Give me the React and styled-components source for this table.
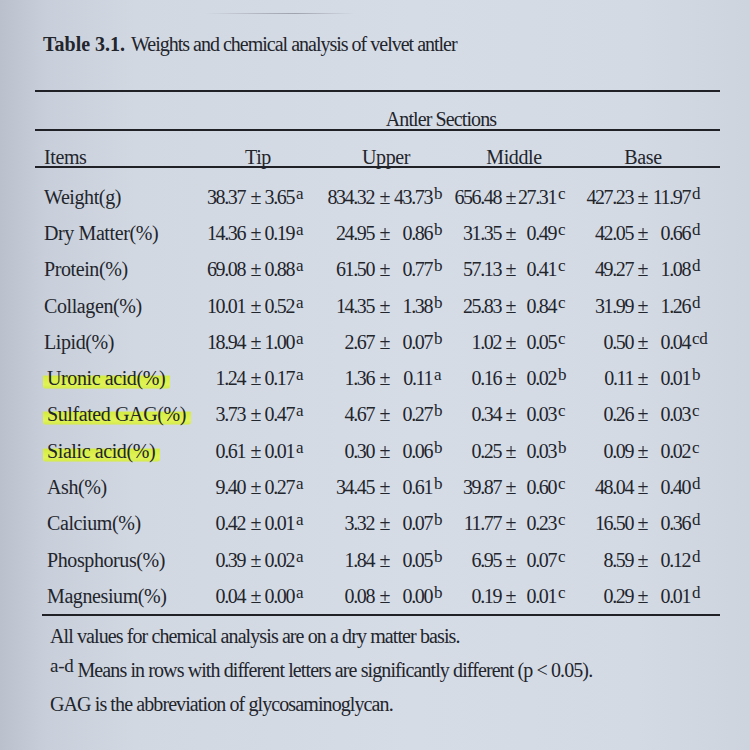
import React from "react";
import styled, { createGlobalStyle } from "styled-components";

const GlobalStyle = createGlobalStyle`
  html, body { margin: 0; padding: 0; }
  body {
    width: 750px;
    height: 750px;
    overflow: hidden;
    background: #d2d8e2;
  }
`;

const Paper = styled.div`
  width: 750px;
  height: 750px;
  box-sizing: border-box;
  padding-top: 13px;
  background: linear-gradient(90deg, #bac1cc 0%, #c8cfda 6%, #d2d8e2 18%, #d6dce6 55%, #d4dae4 85%, #cdd4de 100%);
  font-family: "Liberation Serif", "Times New Roman", serif;
  color: #22252c;
`;

const Smudge = styled.div`
  margin-left: 205px;
  width: 150px;
  height: 1px;
  background: linear-gradient(90deg, rgba(60,60,70,0) 0%, rgba(60,60,70,0.25) 40%, rgba(60,60,70,0.35) 60%, rgba(60,60,70,0) 100%);
`;

const Title = styled.div`
  margin-top: 18px;
  padding-left: 43px;
  font-size: 20px;
  line-height: 24px;
  white-space: nowrap;
`;

const TitleLabel = styled.span`
  font-weight: bold;
  margin-right: 6px;
`;

const TitleText = styled.span`
  letter-spacing: -1px;
`;

const Table = styled.div`
  margin-top: 34px;
  margin-left: 35px;
  width: 685px;
`;

const Rule = styled.div`
  height: 2px;
  background: #1f2127;
  margin-left: ${(p) => p.$indent || 0}px;
`;

const SectionHead = styled.div`
  height: 37px;
  box-sizing: border-box;
  padding-top: 17px;
  padding-left: 127px;
  font-size: 20px;
  line-height: 20px;
  letter-spacing: -0.9px;
  text-align: center;
`;

const HeaderRow = styled.div`
  display: grid;
  grid-template-columns: 169px 108px 148px 108px 150px;
  height: 35px;
  box-sizing: border-box;
  padding-top: 17px;
  font-size: 20px;
  line-height: 18px;
  letter-spacing: -0.4px;
`;

const HeadCell = styled.div`
  text-align: ${(p) => (p.$left ? "left" : "center")};
  padding-left: ${(p) => (p.$left ? "9px" : "0")};
  white-space: nowrap;
`;

const Body = styled.div`
  padding-top: 10.7px;
`;

const Row = styled.div`
  display: grid;
  grid-template-columns:
    169px
    44px 16px 31px 30px
    52px 16px 40px 22px
    49px 14px 39px 28px
    51px 14px 41px 29px;
  height: 36.3px;
  font-size: 20px;
  line-height: 36.3px;
  white-space: nowrap;
`;

const Label = styled.div`
  padding-left: ${(p) => (p.$shift ? 12 : 9)}px;
  letter-spacing: -0.4px;
`;

const Mark = styled.span`
  margin-left: -4px;
  padding: 0 5px 0 4px;
  border-radius: 3px;
  background: linear-gradient(
    180deg,
    rgba(222, 242, 70, 0) 0%,
    rgba(222, 242, 70, 0) 36%,
    rgba(214, 238, 55, 0.92) 42%,
    rgba(226, 245, 78, 0.95) 80%,
    rgba(214, 238, 55, 0.85) 96%,
    rgba(222, 242, 70, 0) 100%
  );
`;

const Num = styled.div`
  display: flex;
  justify-content: flex-end;
  letter-spacing: -1.4px;
  padding-right: ${(p) => (p.$mean ? 3 : 1)}px;
`;

const Pm = styled.div`
  display: flex;
  justify-content: center;
`;

const SupCell = styled.div`
  padding-left: 1px;
`;

const Sup = styled.span`
  font-size: ${(p) => p.$size || 17}px;
  line-height: 1;
  vertical-align: ${(p) => p.$raise || 5}px;
  letter-spacing: -0.3px;
`;

const Notes = styled.div`
  margin-top: 3px;
  padding-left: 50px;
  font-size: 20px;
  line-height: 34px;
  letter-spacing: -0.9px;
  white-space: nowrap;
`;

const Note = styled.div``;

const rows = [
  ["Weight(g)", ["38.37", "3.65", "a"], ["834.32", "43.73", "b"], ["656.48", "27.31", "c"], ["427.23", "11.97", "d"]],
  ["Dry Matter(%)", ["14.36", "0.19", "a"], ["24.95", "0.86", "b"], ["31.35", "0.49", "c"], ["42.05", "0.66", "d"]],
  ["Protein(%)", ["69.08", "0.88", "a"], ["61.50", "0.77", "b"], ["57.13", "0.41", "c"], ["49.27", "1.08", "d"]],
  ["Collagen(%)", ["10.01", "0.52", "a"], ["14.35", "1.38", "b"], ["25.83", "0.84", "c"], ["31.99", "1.26", "d"]],
  ["Lipid(%)", ["18.94", "1.00", "a"], ["2.67", "0.07", "b"], ["1.02", "0.05", "c"], ["0.50", "0.04", "cd"]],
  ["Uronic acid(%)", ["1.24", "0.17", "a"], ["1.36", "0.11", "a"], ["0.16", "0.02", "b"], ["0.11", "0.01", "b"]],
  ["Sulfated GAG(%)", ["3.73", "0.47", "a"], ["4.67", "0.27", "b"], ["0.34", "0.03", "c"], ["0.26", "0.03", "c"]],
  ["Sialic acid(%)", ["0.61", "0.01", "a"], ["0.30", "0.06", "b"], ["0.25", "0.03", "b"], ["0.09", "0.02", "c"]],
  ["Ash(%)", ["9.40", "0.27", "a"], ["34.45", "0.61", "b"], ["39.87", "0.60", "c"], ["48.04", "0.40", "d"]],
  ["Calcium(%)", ["0.42", "0.01", "a"], ["3.32", "0.07", "b"], ["11.77", "0.23", "c"], ["16.50", "0.36", "d"]],
  ["Phosphorus(%)", ["0.39", "0.02", "a"], ["1.84", "0.05", "b"], ["6.95", "0.07", "c"], ["8.59", "0.12", "d"]],
  ["Magnesium(%)", ["0.04", "0.00", "a"], ["0.08", "0.00", "b"], ["0.19", "0.01", "c"], ["0.29", "0.01", "d"]],
];

const highlighted = new Set(["Uronic acid(%)", "Sulfated GAG(%)", "Sialic acid(%)"]);

function Value({ v }) {
  const [mean, sd, letter] = v;
  return (
    <>
      <Num $mean>{mean}</Num>
      <Pm>±</Pm>
      <Num>{sd}</Num>
      <SupCell>
        <Sup>{letter}</Sup>
      </SupCell>
    </>
  );
}

export default function App() {
  return (
    <>
      <GlobalStyle />
      <Paper>
        <Smudge />
        <Title>
          <TitleLabel>Table 3.1.</TitleLabel>
          <TitleText>Weights and chemical analysis of velvet antler</TitleText>
        </Title>
        <Table>
          <Rule />
          <SectionHead>Antler Sections</SectionHead>
          <Rule />
          <HeaderRow>
            <HeadCell $left>Items</HeadCell>
            <HeadCell>Tip</HeadCell>
            <HeadCell>Upper</HeadCell>
            <HeadCell>Middle</HeadCell>
            <HeadCell>Base</HeadCell>
          </HeaderRow>
          <Rule />
          <Body>
            {rows.map(([label, ...vals], i) => (
              <Row key={label}>
                <Label $shift={i >= 5}>
                  {highlighted.has(label) ? <Mark>{label}</Mark> : label}
                </Label>
                {vals.map((v, j) => (
                  <Value key={j} v={v} />
                ))}
              </Row>
            ))}
          </Body>
          <Rule $indent={7} />
        </Table>
        <Notes>
          <Note>All values for chemical analysis are on a dry matter basis.</Note>
          <Note>
            <Sup $size={19} $raise={5}>a-d</Sup> Means in rows with different letters are significantly different (p &lt; 0.05).
          </Note>
          <Note>GAG is the abbreviation of glycosaminoglycan.</Note>
        </Notes>
      </Paper>
    </>
  );
}
